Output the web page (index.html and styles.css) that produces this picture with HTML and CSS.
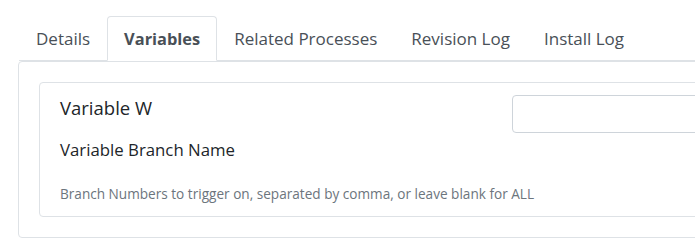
FILE: index.html
```html
<!DOCTYPE html>
<html>
<head>
<meta charset="utf-8">
<link rel="stylesheet" href="styles.css">
</head>
<body>
<div class="page">
  <ul class="tabs">
    <li class="tab">Details</li>
    <li class="tab active">Variables</li>
    <li class="tab">Related Processes</li>
    <li class="tab">Revision Log</li>
    <li class="tab">Install Log</li>
  </ul>
  <div class="panel">
    <div class="card">
      <div class="row">
        <div class="var-title">Variable W</div>
        <div class="field">
          <input class="input" type="text">
        </div>
      </div>
      <div class="var-name">Variable Branch Name</div>
      <div class="var-help">Branch Numbers to trigger on, separated by comma, or leave blank for ALL</div>
    </div>
  </div>
</div>
</body>
</html>
```
FILE: styles.css
```css
html, body {
  margin: 0;
  padding: 0;
  overflow: hidden;
  background: #fff;
}
body {
  font-family: "Open Sans", "Noto Sans", sans-serif;
  color: #212529;
}
.page {
  width: 800px;
  padding: 16px 0 0 18px;
}
.tabs {
  display: flex;
  list-style: none;
  margin: 0 0 0 1px;
  padding: 0;
  border-bottom: 1px solid #dee2e6;
}
.tab {
  padding: 10px 16px 9px;
  font-size: 17px;
  line-height: 24px;
  color: #495057;
  border: 1px solid transparent;
  border-radius: 4px 4px 0 0;
  margin-bottom: -1px;
  white-space: nowrap;
}
.tab.active {
  font-weight: 700;
  font-size: 16.4px;
  background: #fff;
  border-color: #dee2e6 #dee2e6 #fff;
}
.panel {
  border: 1px solid #dee2e6;
  border-radius: 4px;
  padding: 20px;
}
.card {
  border: 1px solid #dee2e6;
  border-radius: 4px;
  padding: 12px 20px;
}
.row {
  display: grid;
  grid-template-columns: 452px 1fr;
  align-items: start;
}
.var-title {
  margin-top: 1px;
  font-size: 18.5px;
  line-height: 23px;
}
.var-name {
  margin-top: 5px;
  font-size: 16.8px;
  line-height: 24px;
}
.var-help {
  margin-top: 22px;
  font-size: 13.6px;
  line-height: 20px;
  color: #6c757d;
  white-space: nowrap;
}
.input {
  display: block;
  box-sizing: border-box;
  width: 100%;
  height: 38px;
  margin: 0;
  border: 1px solid #ced4da;
  border-radius: 4px;
  background: #fff;
}
```
